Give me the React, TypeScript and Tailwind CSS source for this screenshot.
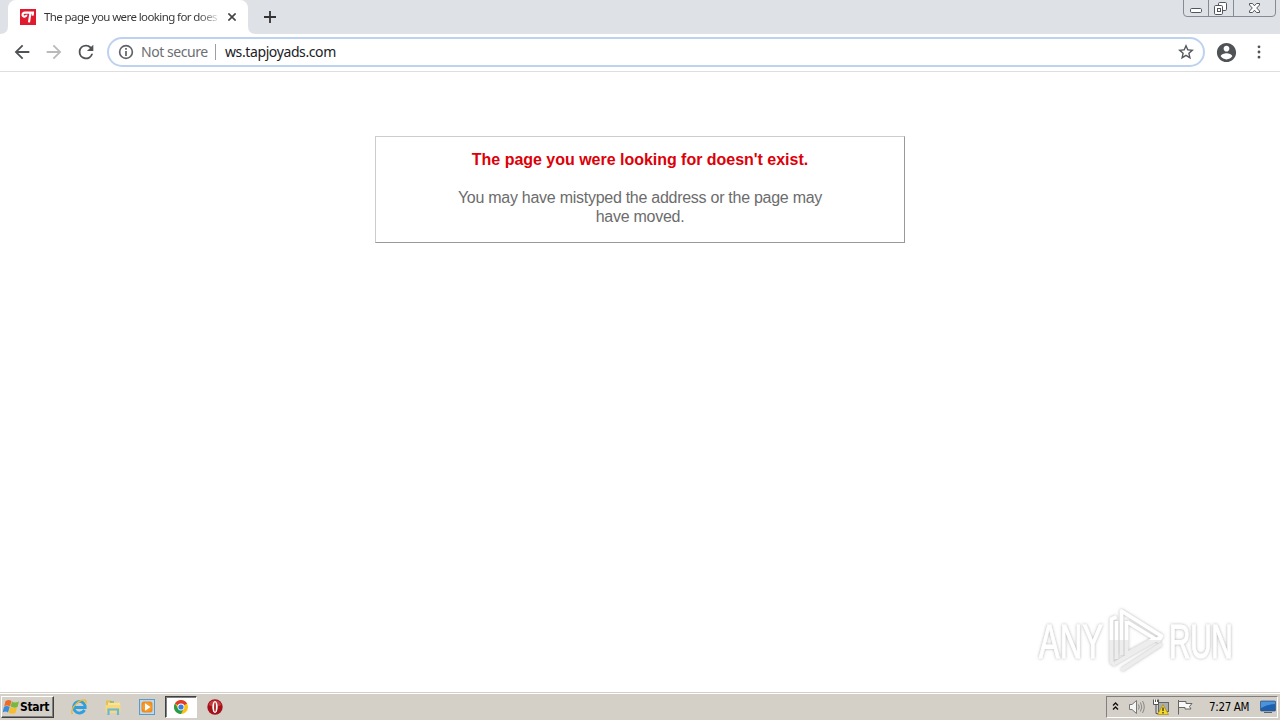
import type { ReactNode } from "react";

function Tab() {
  return (
    <div className="flex h-[34px] items-start bg-[#dee1e6]">
      <svg className="h-[34px] w-2 shrink-0" viewBox="0 0 8 34">
        <path d="M0 34Q8 34 8 26V34Z" fill="#fff" />
      </svg>
      <div className="flex h-[34px] w-[240px] shrink-0 items-center rounded-t-lg bg-white pl-3">
        <svg className="h-4 w-4 shrink-0" viewBox="0 0 16 16">
          <rect width="16" height="16" fill="#e11b2f" />
          <path d="M7 3.600H14M7.500 3.600H5C1.800 3.800 1.800 7.800 4.600 7.600C6 7.500 6.500 6.500 6.300 5.700M10.400 4L9 13.300M13 3.600L12.600 6.600" stroke="#fff" strokeWidth="2.100" fill="none" />
        </svg>
        <div className="ml-2 w-[174px] shrink-0 overflow-hidden whitespace-nowrap bg-linear-to-r from-[#333] from-88% to-[#ddd] bg-clip-text font-['Noto_Sans',sans-serif] text-[11.5px] leading-4 tracking-[-0.6px] text-transparent">
          The page you were looking for doesn't exist
        </div>
        <svg className="ml-[10px] h-2 w-2 shrink-0" viewBox="0 0 8 8">
          <path d="M0.4 0.4L7.6 7.6M7.6 0.4L0.4 7.6" stroke="#444" strokeWidth="1.6" />
        </svg>
      </div>
      <svg className="h-[34px] w-2 shrink-0" viewBox="0 0 8 34">
        <path d="M8 34Q0 34 0 26V34Z" fill="#fff" />
      </svg>
      <svg className="mt-[11px] ml-2 h-3 w-3 shrink-0" viewBox="0 0 12 12">
        <path d="M6 0V12M0 6H12" stroke="#333" strokeWidth="1.8" />
      </svg>
      <svg className="mr-[3px] ml-auto h-[18px] w-[94px] shrink-0" viewBox="0 0 94 18">
        <path d="M0.5 0V13Q0.5 16.5 4 16.5H89Q92.5 16.5 92.5 13V0M25.5 0V16M50.5 0V16" fill="none" stroke="#858a94" />
        <rect x="7.5" y="8.5" width="11" height="4" rx="1.2" fill="#fff" stroke="#50555e" />
        <rect x="35.5" y="2.5" width="8" height="8" rx="1.2" fill="#fff" stroke="#50555e" />
        <rect x="31.5" y="5.5" width="8" height="9" rx="1.2" fill="#fff" stroke="#50555e" />
        <rect x="34.5" y="8.5" width="3" height="3" fill="none" stroke="#50555e" />
        <path d="M66.500 3.500H69.500L71.500 5.800L73.500 3.500H76.500V5L73.700 8L76.500 11V12.500H73.500L71.500 10.200L69.500 12.500H66.500V11L69.300 8L66.500 5Z" fill="#fff" stroke="#50555e" />
      </svg>
    </div>
  );
}

function Icon({ d, className }: { d: string; className: string }) {
  return (
    <svg viewBox="0 0 24 24" fill="currentColor" className={className}>
      <path d={d} />
    </svg>
  );
}

function Toolbar() {
  return (
    <div className="flex h-[38px] shrink-0 items-center border-b border-[#dcdee1] bg-white pb-px pl-[11px]">
      <Icon className="h-[22px] w-[22px] shrink-0 text-[#505356]" d="M20 11H7.83l5.59-5.59L12 4l-8 8 8 8 1.41-1.41L7.83 13H20v-2z" />
      <Icon className="ml-2.5 h-[22px] w-[22px] shrink-0 text-[#b8babc]" d="M12 4l-1.41 1.41L16.17 11H4v2h12.17l-5.58 5.59L12 20l8-8z" />
      <Icon className="ml-2.5 h-[22px] w-[22px] shrink-0 text-[#505356]" d="M17.65 6.35A7.95 7.95 0 0 0 12 4a8 8 0 1 0 7.73 10h-2.08A6 6 0 1 1 12 6c1.66 0 3.14.69 4.22 1.78L13 11h7V4z" />
      <div className="ml-2.5 flex h-[30px] w-[1098px] shrink-0 items-center rounded-full border-2 border-[#bdd2f0] pl-[9px] font-['Noto_Sans',sans-serif] text-[14px] leading-5">
        <Icon className="h-4 w-4 shrink-0 text-[#5f6368]" d="M10.700 6h2.600v2.600h-2.600zm0 4.500h2.600v7.500h-2.600zM12 1.200a10.800 10.800 0 1 0 0 21.600a10.800 10.800 0 0 0 0-21.600zm0 19.100a8.300 8.300 0 1 1 0-16.600a8.300 8.300 0 0 1 0 16.600z" />
        <span className="ml-[7px] w-[67px] shrink-0 whitespace-nowrap tracking-[-0.45px] text-[#6b6e72]">Not secure</span>
        <span className="ml-[7px] h-4 w-px bg-[#9b9ea2]" />
        <span className="ml-[9px] whitespace-nowrap tracking-[-0.39px] text-[#202124]">ws.tapjoyads.com</span>
        <Icon className="mr-[9px] ml-auto h-4 w-4 shrink-0 text-[#55585c]" d="M24 8.700L15.400 7.900L12 0L8.600 7.900L0 8.700L6.500 14.400L4.600 22.800L12 18.300L19.400 22.800L17.500 14.400ZM12 15.900L7.700 18.500L8.800 13.600L5 10.300L10 9.900L12 5.200L14 9.900L19 10.300L15.200 13.600L16.300 18.500Z" />
      </div>
      <Icon className="ml-[9.5px] h-[23px] w-[23px] shrink-0 text-[#505356]" d="M12 2C6.480 2 2 6.480 2 12s4.480 10 10 10 10-4.480 10-10S17.520 2 12 2zm0 3c1.660 0 3 1.340 3 3s-1.340 3-3 3-3-1.340-3-3 1.340-3 3-3zm0 14.200c-2.500 0-4.710-1.280-6-3.220.03-1.990 4-3.080 6-3.080 1.990 0 5.970 1.090 6 3.080-1.290 1.940-3.500 3.220-6 3.220z" />
      <Icon className="ml-[11px] h-5 w-5 shrink-0 text-[#505356]" d="M12 7.500a1.700 1.700 0 1 0 0-3.400 1.700 1.700 0 0 0 0 3.400zm0 2.800a1.700 1.700 0 1 0 0 3.400a1.700 1.700 0 0 0 0-3.400zm0 6.200a1.700 1.700 0 1 0 0 3.400a1.700 1.700 0 0 0 0-3.400z" />
    </div>
  );
}

function Watermark() {
  return (
    <svg className="absolute right-[36px] bottom-[16px] h-[72px] w-[212px]" viewBox="0 0 212 72">
      <defs>
        <filter id="glow" x="-10%" y="-10%" width="120%" height="120%">
          <feDropShadow dx="0" dy="0" stdDeviation="1.8" floodColor="#777" floodOpacity="0.6" />
        </filter>
        <linearGradient id="mark" x1="0" y1="0" x2="0" y2="72" gradientUnits="userSpaceOnUse">
          <stop offset="0.51" stopColor="#fff" />
          <stop offset="0.51" stopColor="#ededed" />
        </linearGradient>
      </defs>
      <g filter="url(#glow)" fill="url(#mark)" fontFamily="'Liberation Sans', sans-serif" fontSize="48">
        <text transform="translate(7 54) scale(.64 1)" textLength="100" stroke="url(#mark)" strokeWidth="1">ANY</text>
        <text transform="translate(137 54) scale(.62 1)" textLength="103" stroke="url(#mark)" strokeWidth="1">RUN</text>
        <g transform="translate(-2.5 -1)" fill="none" stroke="url(#mark)" strokeWidth="3.600" strokeLinejoin="round">
          <path d="M92 52V8L132 33L129 38L98 19M97 18V51L124 36" />
          <path d="M87 14L82 16V59L86 62M87 18V56M86 60L131 34M92 67L132 41" />
        </g>
      </g>
    </svg>
  );
}

function Page() {
  return (
    <main className="relative h-[620px] shrink-0 bg-white pt-16">
      <div className="mx-auto h-[107px] w-[530px] border border-[#ccc] border-r-[#999] border-b-[#999] px-16 pt-[11px] text-center font-['Liberation_Sans',Arial,sans-serif] text-base">
        <h1 className="leading-6 font-bold tracking-[-0.02px] text-[#dc0008]">The page you were looking for doesn't exist.</h1>
        <p className="mt-4 leading-[19px] tracking-[-0.27px] text-[#6c6c6c]">
          You may have mistyped the address or the page may
          <br />
          have moved.
        </p>
      </div>
      <Watermark />
    </main>
  );
}

function Launcher({ children }: { children: ReactNode }) {
  return <svg className="h-4 w-4 shrink-0" viewBox="0 0 16 16">{children}</svg>;
}

function Taskbar() {
  return (
    <div className="flex h-7 shrink-0 items-center border-t border-[#d4d0c8] bg-[#d4d0c8] font-['DejaVu_Sans_Condensed','DejaVu_Sans',sans-serif] shadow-[inset_0_1px_0_#fff]">
      <button className="mt-px ml-px flex h-[22px] w-[53px] shrink-0 items-center border border-t-white border-r-[#404040] border-b-[#404040] border-l-white pl-px shadow-[inset_-1px_-1px_0_#808080]">
        <svg className="h-4 w-4 shrink-0" viewBox="0 0 16 16">
          <path d="M2.500 2Q6 0 8.500 2L7 7.500Q4 5.500 1.200 7.500Z" fill="#ed6b2a" />
          <path d="M9 2.500Q12 4.500 16 2.500L14.500 8Q11 9.500 7.500 7.500Z" fill="#79b83c" />
          <path d="M1 8Q4 6.200 6.700 8L5 13.500Q2.500 11.500 -0.500 13.500Z" fill="#378bdd" />
          <path d="M7.200 8Q10 10 14 8.500L12.500 14Q8.500 15.500 5.500 13.500Z" fill="#f8bd2d" />
        </svg>
        <span className="ml-px text-[12px] leading-4 font-bold tracking-[-0.35px] text-black">Start</span>
      </button>
      <div className="mt-px ml-[17px] flex items-center">
        <Launcher>
          <path d="M13.500 11A5.800 5.800 0 1 1 14.200 8.500H4" fill="none" stroke="#2f9fdf" strokeWidth="2.800" />
          <path d="M1.500 15C-1 11.500 4 4 10 1.500C14.500 0 16 1.500 14.500 5" fill="none" stroke="#e8b83a" strokeWidth="1.400" />
        </Launcher>
        <div className="ml-[18px] flex">
          <Launcher>
            <path d="M1 1.500H6L7 3.500H14V13H1Z" fill="#e7bd57" />
            <path d="M3 3.500H15V12H3Z" fill="#f7e39a" />
            <path d="M0.500 6H15.500V14H0.500Z" fill="#f6d97b" />
            <path d="M3.500 16V10.500H13V16" fill="none" stroke="#69b7dd" strokeWidth="2.200" />
            <path d="M5 3H9" stroke="#58ad58" />
          </Launcher>
        </div>
        <div className="ml-[18px] flex">
          <Launcher>
            <rect x="0.500" y="0.500" width="15" height="15" fill="#b9d9ef" stroke="#5b9bcc" />
            <rect x="2.500" y="2.500" width="11" height="11" rx="2.500" fill="#f18a1b" />
            <circle cx="8" cy="8" r="4.700" fill="#f49b2e" />
            <path d="M6 4.300L11.500 8L6 11.700Z" fill="#fff" />
          </Launcher>
        </div>
        <div className="ml-[10px] flex h-[22px] w-8 items-center justify-center border border-t-[#404040] border-r-white border-b-white border-l-[#404040] bg-white shadow-[inset_1px_1px_0_#808080]">
          <svg className="h-[14px] w-[14px]" viewBox="0 0 14 14">
            <circle cx="7" cy="7" r="7" fill="#fbc116" />
            <path d="M7 7L0.940 3.500A7 7 0 0 1 13.060 3.500Z" fill="#df3c30" />
            <path d="M0.940 3.500A7 7 0 0 0 7 14L9.800 8.500L4.300 8.700Z" fill="#249b50" />
            <circle cx="7" cy="7" r="3.400" fill="#fff" />
            <circle cx="7" cy="7" r="2.600" fill="#397de0" />
          </svg>
        </div>
        <div className="ml-[9.5px] flex">
          <Launcher>
            <circle cx="8" cy="8" r="7.700" fill="#a31219" />
            <path d="M1.500 6A7 7 0 0 1 14.500 6Q8 9 1.500 6Z" fill="#c63c3e" />
            <ellipse cx="8" cy="8" rx="2.700" ry="5.900" fill="#fff" />
            <ellipse cx="8" cy="8" rx="1" ry="4.700" fill="#b33034" />
          </Launcher>
        </div>
      </div>
      <div className="mt-px mr-[2px] ml-auto flex h-[22px] w-[172px] shrink-0 items-center border border-t-[#808080] border-r-white border-b-white border-l-[#808080]">
        <svg className="mb-0.5 ml-[5px] h-[9px] w-[7px] shrink-0" viewBox="0 0 7 9">
          <path d="M1 3.500L3.500 1L6 3.500M1 7.500L3.500 5L6 7.500" fill="none" stroke="#111" strokeWidth="1.400" />
        </svg>
        <svg className="ml-[10px] h-4 w-4 shrink-0" viewBox="0 0 16 16">
          <path d="M0.500 5.500H3L7.500 1.500V14.500L3 10.500H0.500Z" fill="#f5f5f5" stroke="#777" />
          <path d="M9.500 5.500Q11 8 9.500 10.500M11.500 3.500Q14 8 11.500 12.500M13.500 2Q17 8 13.500 14" fill="none" stroke="#888" />
        </svg>
        <svg className="ml-2 h-4 w-4 shrink-0" viewBox="0 0 16 16">
          <rect x="5.500" y="3.500" width="10" height="9" fill="#a9adb1" stroke="#666" />
          <path d="M0.500 0.500H5.500V5.500H0.500Z" fill="#fff" />
          <path d="M0.500 0.500V5.500H5.500V0.500M2.500 0.500V3M4.500 0.500V3M3 5V14.500H7" fill="none" stroke="#555" />
          <path d="M10 5.500L15.500 15.500H4.500Z" fill="#f6d928" stroke="#a98b10" strokeWidth="0.700" />
          <path d="M10 8.500V12M10 13V14.500" stroke="#222" strokeWidth="1.200" />
        </svg>
        <svg className="ml-2 h-4 w-4 shrink-0" viewBox="0 0 16 16">
          <path d="M1.500 1V15.500M2 2.500H9V4.500H15L12.500 7.500L14 10H8V8.500H2" fill="#f8f8f8" stroke="#666" />
        </svg>
        <span className="ml-4 w-[44px] shrink-0 whitespace-nowrap text-[11.500px] leading-4 tracking-[-0.33px] text-black">7:27 AM</span>
        <svg className="ml-[7px] h-[14px] w-4 shrink-0" viewBox="0 0 16 14">
          <rect x="0.500" y="1" width="15" height="10" rx="0.700" fill="#1e5fb0" stroke="#38516f" strokeWidth="0.700" />
          <path d="M1 1.500H15V4Q8 4 1 8Z" fill="#4b93dc" />
          <path d="M4 12.500H12" stroke="#526171" />
        </svg>
      </div>
    </div>
  );
}

export default function App() {
  return (
    <div className="flex h-[720px] w-[1280px] flex-col overflow-hidden bg-white">
      <Tab />
      <Toolbar />
      <Page />
      <Taskbar />
    </div>
  );
}
